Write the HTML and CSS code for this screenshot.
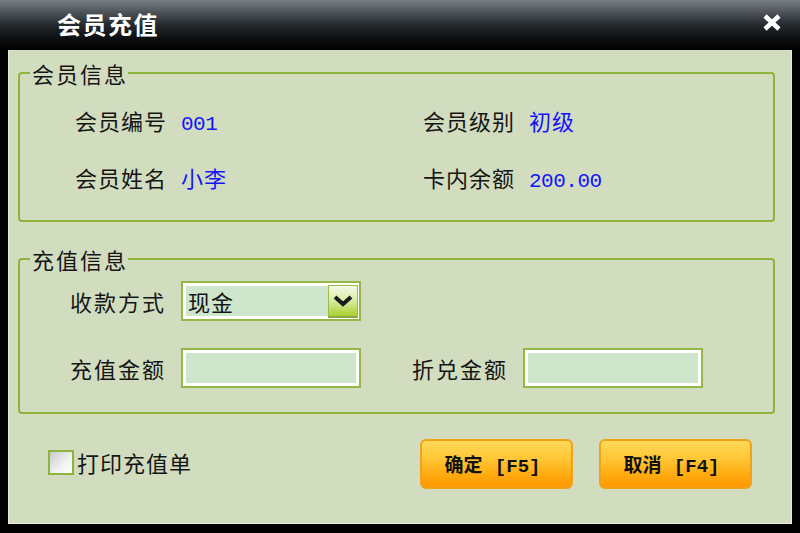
FILE: index.html
```html
<!DOCTYPE html>
<html lang="zh-CN">

<head>
    <meta charset="UTF-8">
    <title>会员充值</title>
    <link rel="stylesheet" href="styles.css">
</head>

<body>
    <div class="window">
        <div class="titlebar">
            <span class="title">会员充值</span>
            <span class="close">
                <svg width="20" height="17" viewBox="0 0 20 17">
                    <path d="M3 2 L17 15 M17 2 L3 15" stroke="#fff" stroke-width="4.5" fill="none"/>
                </svg>
            </span>
        </div>
        <div class="panel">
            <fieldset class="group info">
                <legend>会员信息</legend>
                <div class="info-grid">
                    <div class="field"><span class="label">会员编号</span><span class="value num">001</span></div>
                    <div class="field"><span class="label">会员级别</span><span class="value">初级</span></div>
                    <div class="field"><span class="label">会员姓名</span><span class="value">小李</span></div>
                    <div class="field"><span class="label">卡内余额</span><span class="value num">200.00</span></div>
                </div>
            </fieldset>

            <fieldset class="group charge">
                <legend>充值信息</legend>
                <div class="form">
                    <div class="form-row">
                        <span class="form-label">收款方式</span>
                        <div class="select">
                            <span class="select-text">现金</span>
                            <span class="arrow">
                                <svg width="20" height="12" viewBox="0 0 20 12">
                                    <path d="M2 2 L10 9 L18 2" stroke="#1b1b1b" stroke-width="4" fill="none"/>
                                </svg>
                            </span>
                        </div>
                    </div>
                    <div class="form-row">
                        <span class="form-label">充值金额</span>
                        <div class="input"></div>
                        <span class="form-label second">折兑金额</span>
                        <div class="input"></div>
                    </div>
                </div>
            </fieldset>

            <div class="footer">
                <label class="check"><span class="box"></span>打印充值单</label>
                <div class="buttons">
                    <button class="btn">确定 <span class="key">[F5]</span></button>
                    <button class="btn">取消 <span class="key">[F4]</span></button>
                </div>
            </div>
        </div>
    </div>
</body>

</html>
```

FILE: styles.css
```css
html,
body {
    margin: 0;
    padding: 0;
    background: #000;
}

body {
    font-family: "Noto Sans CJK SC", "Noto Sans", sans-serif;
    color: #151515;
}

.window {
    width: 800px;
    height: 533px;
    display: flex;
    flex-direction: column;
}

/* 标题栏 */
.titlebar {
    height: 50px;
    flex-shrink: 0;
    display: flex;
    align-items: center;
    justify-content: space-between;
    padding: 0 18px 0 57px;
    box-sizing: border-box;
    background: linear-gradient(#777d83 0%, #555b61 20%, #272c31 48%, #0b0d0f 78%, #000 100%);
}

.title {
    color: #fff;
    font-size: 24px;
    font-weight: bold;
    letter-spacing: 1.5px;
    line-height: 1;
    margin-top: -2px;
}

.close {
    display: flex;
    margin-top: -5px;
}

/* 主体 */
.panel {
    flex: 1;
    margin: 0 8px 9px;
    background: #d1ddbe;
    border-left: 1px solid #e6eed6;
    border-right: 1px solid #e6eed6;
    border-bottom: 1px solid #e6eed6;
    display: flex;
    flex-direction: column;
}

.group {
    margin: 0 16px 0 9px;
    padding: 0;
    border: 2px solid #8db53c;
    border-radius: 4px;
    min-width: 0;
}

.group legend {
    font-size: 22px;
    line-height: 26px;
    letter-spacing: 2px;
    margin-left: 10px;
    padding: 0 0 0 2px;
}

.info {
    margin-top: 10px;
}

.info-grid {
    display: grid;
    grid-template-columns: 348px 1fr;
    row-gap: 17px;
    padding: 14px 0 23px 55px;
}

.field {
    height: 40px;
    display: flex;
    align-items: baseline;
    gap: 14px;
    line-height: 40px;
}

.label,
.form-label {
    font-size: 22px;
    letter-spacing: 1px;
}

.value {
    color: #1414ff;
    font-size: 22px;
    letter-spacing: 1px;
}

.value.num {
    font-family: "Liberation Mono", "DejaVu Sans Mono", monospace;
    font-size: 21px;
    letter-spacing: -0.5px;
}

.charge {
    margin-top: 24px;
}

.form {
    padding: 9px 0 24px 50px;
}

.form-row {
    display: flex;
    align-items: center;
    height: 40px;
}

.form-row + .form-row {
    margin-top: 27px;
}

.form-label {
    width: 97px;
    margin-right: 14px;
    letter-spacing: 2px;
    white-space: nowrap;
}

.form-label.second {
    margin-left: 51px;
}

.select,
.input {
    width: 180px;
    height: 40px;
    box-sizing: border-box;
    border: 2px solid #93b846;
    box-shadow: inset 0 0 0 3px #fff;
    background: #cde6cc;
}

.select {
    display: flex;
    align-items: center;
    justify-content: space-between;
    padding: 0 1px 0 5px;
}

.select-text {
    font-size: 22px;
    letter-spacing: 1px;
}

.arrow {
    width: 30px;
    height: 33px;
    box-sizing: border-box;
    border: 1px solid #9abd4c;
    border-bottom: 2px solid #8aa84a;
    background: linear-gradient(#f6f9e6 0%, #dcedaa 45%, #a9d12e 100%);
    display: flex;
    align-items: center;
    justify-content: center;
}

/* 底部 */
.footer {
    margin-top: 25px;
    padding: 0 39px;
    display: flex;
    justify-content: space-between;
    align-items: flex-start;
}

.check {
    display: flex;
    align-items: center;
    margin-top: 7px;
    font-size: 22px;
    letter-spacing: 1px;
}

.box {
    width: 26px;
    height: 25px;
    box-sizing: border-box;
    border: 2px solid #8db53c;
    background: linear-gradient(135deg, #c9c9c9 0%, #f2f2f2 60%, #fdfdfd 100%);
    margin-right: 3px;
}

.buttons {
    display: flex;
    gap: 26px;
}

.btn {
    width: 153px;
    height: 50px;
    border: 2px solid #f0a31a;
    border-radius: 6px;
    background: linear-gradient(#ffd95a 0%, #ffc534 40%, #ffa90f 75%, #ff9800 100%);
    font-family: "Noto Sans CJK SC", sans-serif;
    font-size: 19px;
    font-weight: bold;
    color: #111;
    padding: 0 8px 0 0;
    cursor: pointer;
}

.key {
    font-family: "Liberation Mono", "DejaVu Sans Mono", monospace;
    font-weight: bold;
    margin-left: 8px;
}
```
